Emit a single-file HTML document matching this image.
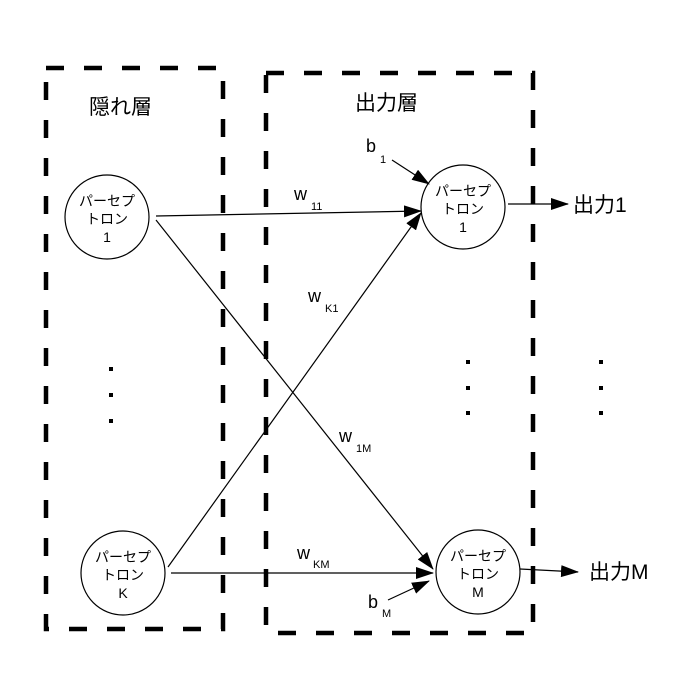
<!DOCTYPE html>
<html><head><meta charset="utf-8"><style>
html,body{margin:0;padding:0;background:#fff;}
svg{display:block;}
text{font-family:"Liberation Sans","Noto Sans CJK JP",sans-serif;fill:#000;}
</style></head><body>
<svg width="680" height="680" viewBox="0 0 680 680" xmlns="http://www.w3.org/2000/svg">
<defs>
<marker id="b" markerWidth="18" markerHeight="12" refX="17" refY="6" orient="auto" markerUnits="userSpaceOnUse">
<path d="M0,0 L18,6 L0,12 Z" fill="#000"/>
</marker>
</defs>
<g fill="none" stroke="#000" stroke-width="4.5" stroke-dasharray="18,20">
<rect x="46" y="68" width="177" height="561"/>
<rect x="266" y="73" width="267" height="560"/>
</g>
<g fill="none" stroke="#000" stroke-width="1.2">
<circle cx="107" cy="217" r="42"/>
<circle cx="123" cy="573" r="42"/>
<circle cx="463" cy="207" r="42"/>
<circle cx="478" cy="572" r="42"/>
<line x1="156" y1="216" x2="421" y2="211" marker-end="url(#b)"/>
<line x1="156" y1="220" x2="433" y2="569" marker-end="url(#b)"/>
<line x1="168" y1="567" x2="421" y2="213" marker-end="url(#b)"/>
<line x1="171" y1="573" x2="433" y2="573" marker-end="url(#b)"/>
<line x1="392" y1="160" x2="429" y2="184" marker-end="url(#b)"/>
<line x1="388" y1="600" x2="429" y2="581" marker-end="url(#b)"/>
<line x1="508" y1="204" x2="568" y2="204" marker-end="url(#b)"/>
<line x1="520" y1="569" x2="578" y2="572" marker-end="url(#b)"/>
</g>
<g fill="#000">
<rect x="109" y="367" width="4" height="4"/><rect x="109" y="393" width="4" height="4"/><rect x="109" y="419" width="4" height="4"/>
<rect x="466" y="360" width="4" height="4"/><rect x="466" y="386" width="4" height="4"/><rect x="466" y="411" width="4" height="4"/>
<rect x="599" y="360" width="4" height="4"/><rect x="599" y="386" width="4" height="4"/><rect x="599" y="411" width="4" height="4"/>
</g>
<text x="89" y="114" font-size="21">隠れ層</text>
<text x="355" y="110" font-size="21">出力層</text>
<text x="573" y="212" font-size="21">出力1</text>
<text x="589" y="579" font-size="21">出力M</text>
<g font-size="14" text-anchor="middle">
<text x="107" y="206">パーセプ</text><text x="107" y="224">トロン</text><text x="107" y="242">1</text>
<text x="123" y="562">パーセプ</text><text x="123" y="580">トロン</text><text x="123" y="598">K</text>
<text x="463" y="196">パーセプ</text><text x="463" y="214">トロン</text><text x="463" y="232">1</text>
<text x="478" y="561">パーセプ</text><text x="478" y="579">トロン</text><text x="478" y="597">M</text>
</g>
<g font-size="18">
<text x="366" y="152">b</text><text x="368" y="608">b</text>
<text x="294" y="200">w</text><text x="308" y="302">w</text><text x="339" y="442">w</text><text x="297" y="559">w</text>
</g>
<g font-size="11">
<text x="380" y="163">1</text><text x="382" y="617">M</text>
<text x="311" y="210">11</text><text x="325" y="312">K1</text><text x="356" y="452">1M</text><text x="313" y="568">KM</text>
</g>
</svg>
</body></html>
